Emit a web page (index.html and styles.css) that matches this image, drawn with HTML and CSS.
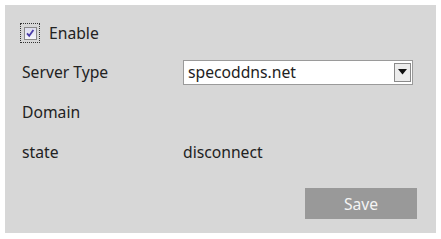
FILE: index.html
```html
<!DOCTYPE html>
<html>
<head>
<meta charset="utf-8">
<link rel="stylesheet" href="styles.css">
</head>
<body>
<div class="panel">
  <div class="row enable-row">
    <span class="check-focus"><span class="checkbox"><svg width="10" height="10" viewBox="0 0 10 10"><path d="M2 5.4 L4.2 7.8 L8.4 2" fill="none" stroke="#4a3ca8" stroke-width="1.8"/></svg></span></span>
    <span class="label-enable">Enable</span>
  </div>
  <div class="row">
    <span class="label">Server Type</span>
    <div class="select">
      <span class="select-text">specoddns.net</span>
      <span class="select-btn"><svg width="9" height="6" viewBox="0 0 9 6"><path d="M0 0 H9 L4.5 5.5 Z" fill="#111"/></svg></span>
    </div>
  </div>
  <div class="row">
    <span class="label">Domain</span>
  </div>
  <div class="row">
    <span class="label">state</span>
    <span class="value">disconnect</span>
  </div>
  <div class="actions">
    <button class="save">Save</button>
  </div>
</div>
</body>
</html>
```
FILE: styles.css
```css
html, body {
  margin: 0;
  padding: 0;
  background: #ffffff;
}
body {
  padding: 5px;
  font-family: "Noto Sans", "Open Sans", sans-serif;
  font-size: 15.7px;
  color: #222;
}
.panel {
  width: 431px;
  height: 228px;
  background: #d7d7d7;
  box-sizing: border-box;
  padding: 14px 0 0 15px;
}
.row {
  display: flex;
  align-items: center;
  height: 40px;
  padding-left: 2px;
}
.enable-row {
  height: 28px;
  margin-bottom: 5px;
  padding-left: 0;
}
.check-focus {
  width: 18px;
  height: 18px;
  border: 1px dotted #333;
  display: flex;
  align-items: center;
  justify-content: center;
}
.checkbox {
  width: 13px;
  height: 13px;
  border: 1px solid #8a8a8a;
  background: linear-gradient(#dcdcee, #f6f6fa);
  display: flex;
  align-items: center;
  justify-content: center;
  box-sizing: border-box;
}
.label-enable {
  margin-left: 9px;
}
.label {
  width: 161px;
}
.select {
  width: 230px;
  height: 25px;
  box-sizing: border-box;
  border: 1px solid #9a9a9a;
  background: #fff;
  display: flex;
  align-items: center;
  justify-content: space-between;
  padding: 0 1px 0 4px;
}
.select-btn {
  width: 17px;
  height: 19px;
  box-sizing: border-box;
  border: 1px solid #8a8a8a;
  background: #ececec;
  display: flex;
  align-items: center;
  justify-content: center;
}
.actions {
  display: flex;
  justify-content: flex-end;
  padding-right: 19px;
  margin-top: 16px;
}
.save {
  width: 112px;
  height: 31px;
  border: none;
  background: #999999;
  color: #f4f4f4;
  font-family: "Noto Sans", "Open Sans", sans-serif;
  font-size: 15.7px;
  padding: 0;
}
```
